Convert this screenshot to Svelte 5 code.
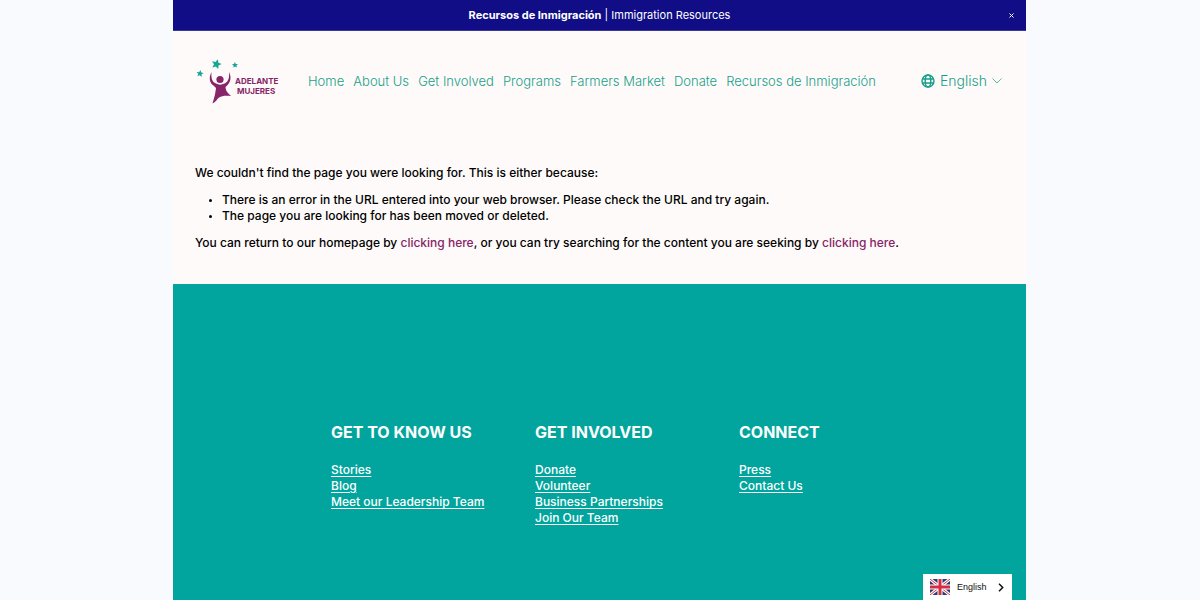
<script lang="ts">
	const navigation = [
		'Home',
		'About Us',
		'Get Involved',
		'Programs',
		'Farmers Market',
		'Donate',
		'Recursos de Inmigración'
	];

	const footer = [
		{ title: 'Get to know us', links: ['Stories', 'Blog', 'Meet our Leadership Team'] },
		{
			title: 'Get involved',
			links: ['Donate', 'Volunteer', 'Business Partnerships', 'Join Our Team']
		},
		{ title: 'Connect', links: ['Press', 'Contact Us'] }
	];

	let showAnnouncement = $state(true);
</script>

<div class="shell">
	<div class="site">
		{#if showAnnouncement}
			<div class="announcement">
				<a href="#recursos"><strong>Recursos de Inmigración</strong> <span>| Immigration Resources</span></a>
				<button aria-label="Close announcement" onclick={() => (showAnnouncement = false)}>
					<svg width="5" height="5" viewBox="0 0 5 5"><path d="M.5.5l4 4M4.5.5l-4 4" /></svg>
				</button>
			</div>
		{/if}

		<header>
			<a class="logo" href="#home" aria-label="Adelante Mujeres">
				<svg width="88" height="48" viewBox="0 0 88 48">
					<defs>
						<path id="star" d="M0-5L1.5-1.7 5-1.4 2.3.9 3.1 4.4 0 2.5-3.1 4.4-2.3.9-5-1.4-1.5-1.7z" />
					</defs>
					<g fill="#16a596">
						<use href="#star" transform="translate(5 16.5) rotate(8) scale(.72)" />
						<use href="#star" transform="translate(21.5 7) rotate(16)" />
						<use href="#star" transform="translate(40 8) rotate(-4) scale(.6)" />
					</g>
					<g fill="#862567">
						<circle cx="25" cy="22.5" r="3.6" />
						<path
							d="M16.500 15c-3 6-2 11 2.500 14l2 2c-.5 5-1.500 9-3.500 15.500 3-1.500 5-4.500 6.500-6 3-2 7-2 12-1.500-3.500-3-5.500-5.500-5.500-9 5-4 6.500-9 3.500-15 .5 6-.5 9.500-4.500 11.500-3 1.500-6 1.500-8.500 0-4-1.500-5-5.500-4.500-11.500z"
						/>
						<text x="40" y="27">ADELANTE</text>
						<text x="42" y="37">MUJERES</text>
					</g>
				</svg>
			</a>

			<nav>
				{#each navigation as item (item)}
					<a href="#{item}">{item}</a>
				{/each}
			</nav>

			<button class="language">
				<svg width="14" height="14" viewBox="0 0 14 14">
					<circle cx="7" cy="7" r="6" />
					<ellipse cx="7" cy="7" rx="2.8" ry="6" />
					<path d="M1.5 5h11M1.5 9h11" />
				</svg>
				English
				<svg class="chevron" width="10" height="6" viewBox="0 0 10 6"><path d="M.5.5L5 5 9.5.5" /></svg>
			</button>
		</header>

		<main>
			<p>We couldn't find the page you were looking for. This is either because:</p>
			<ul>
				<li>There is an error in the URL entered into your web browser. Please check the URL and try again.</li>
				<li>The page you are looking for has been moved or deleted.</li>
			</ul>
			<p>
				You can return to our homepage by <a href="#home">clicking here</a>, or you can try searching for the
				content you are seeking by <a href="#search">clicking here</a>.
			</p>
		</main>

		<footer>
			{#each footer as column (column.title)}
				<section>
					<h4>{column.title}</h4>
					{#each column.links as link (link)}
						<div><a href="#{link}">{link}</a></div>
					{/each}
				</section>
			{/each}
		</footer>

		<button class="translate">
			<svg width="20" height="16" viewBox="0 0 20 16">
				<path fill="#2e3b72" d="M0 0h20v16H0z" />
				<path stroke="#fff" stroke-width="3" d="M0 0l20 16M20 0L0 16" />
				<path stroke="#cf3648" d="M0 0l20 16M20 0L0 16" />
				<path stroke="#fff" stroke-width="5" d="M10 0v16M0 8h20" />
				<path stroke="#d52c43" stroke-width="3" d="M10 0v16M0 8h20" />
			</svg>
			<span>English</span>
			<svg width="6" height="9" viewBox="0 0 6 9">
				<path fill="none" stroke="#111" stroke-width="1.5" d="M1 .8l3.7 3.7L1 8.2" />
			</svg>
		</button>
	</div>
</div>

<style>
	:global(body) {
		background: #f8fafe;
	}

	.shell {
		display: grid;
		grid-template-columns: 173fr 853fr 174fr;
		font-family: Inter, sans-serif;
	}

	.site {
		grid-column: 2;
		position: relative;
		display: flex;
		flex-direction: column;
		min-height: 100vh;
		background: #fefaf9;
	}

	button {
		padding: 0;
		border: 0;
		background: none;
		font: inherit;
		cursor: pointer;
	}

	.announcement {
		display: grid;
		grid-template-columns: 1fr auto 1fr;
		align-items: center;
		height: 31px;
		padding: 0 12px;
		background: #100d86;
		border-bottom: 1px solid #39378f;
		box-sizing: border-box;
		font-size: 11px;
	}

	.announcement a {
		grid-column: 2;
		color: #fff;
		text-decoration: none;
	}

	.announcement button {
		display: flex;
		justify-self: end;
	}

	.announcement path {
		stroke: #fff;
	}

	header {
		display: flex;
		align-items: center;
		height: 100px;
		padding: 0 24px 0 22px;
	}

	.logo {
		display: flex;
		flex: none;
	}

	.logo text {
		font: 700 8px Inter, sans-serif;
	}

	nav {
		flex: 1;
		display: flex;
		justify-content: space-between;
		margin: 0 45px 0 25px;
		font-size: 13px;
	}

	nav a,
	.language {
		color: #16a089;
		font-weight: 300;
		line-height: 20px;
		text-decoration: none;
		white-space: nowrap;
	}

	.language {
		display: flex;
		align-items: center;
		gap: 5px;
		font-size: 14px;
	}

	.language svg {
		fill: none;
		stroke: #16a089;
		stroke-width: 1.4;
	}

	.language .chevron {
		stroke-width: 0.7;
	}

	main {
		padding: 34px 22px 33px;
		font-size: 12px;
		font-weight: 500;
		line-height: 16px;
	}

	main p {
		margin: 0;
	}

	main ul {
		margin: 11px 0;
		padding-left: 27px;
	}

	main li::marker {
		font-size: 9px;
	}

	main a {
		color: #862567;
		text-decoration: none;
	}

	footer {
		flex: 1;
		display: grid;
		grid-template-columns: repeat(3, 1fr);
		padding: 137px 83px 64px 158px;
		background: #01a59d;
		color: #fff;
		font-size: 12px;
		font-weight: 500;
		line-height: 16px;
	}

	h4 {
		margin: 0 0 19px;
		font-size: 16px;
		line-height: 22px;
		text-transform: uppercase;
	}

	footer a {
		color: inherit;
		text-underline-offset: 2px;
	}

	.translate {
		position: absolute;
		right: 14px;
		bottom: 0;
		display: flex;
		align-items: center;
		width: 89px;
		height: 26px;
		padding: 0 8px 0 7px;
		background: #fff;
		color: #111;
		font: 9px 'Liberation Sans', sans-serif;
	}

	.translate span {
		flex: 1;
		padding-left: 7px;
		text-align: left;
	}
</style>
